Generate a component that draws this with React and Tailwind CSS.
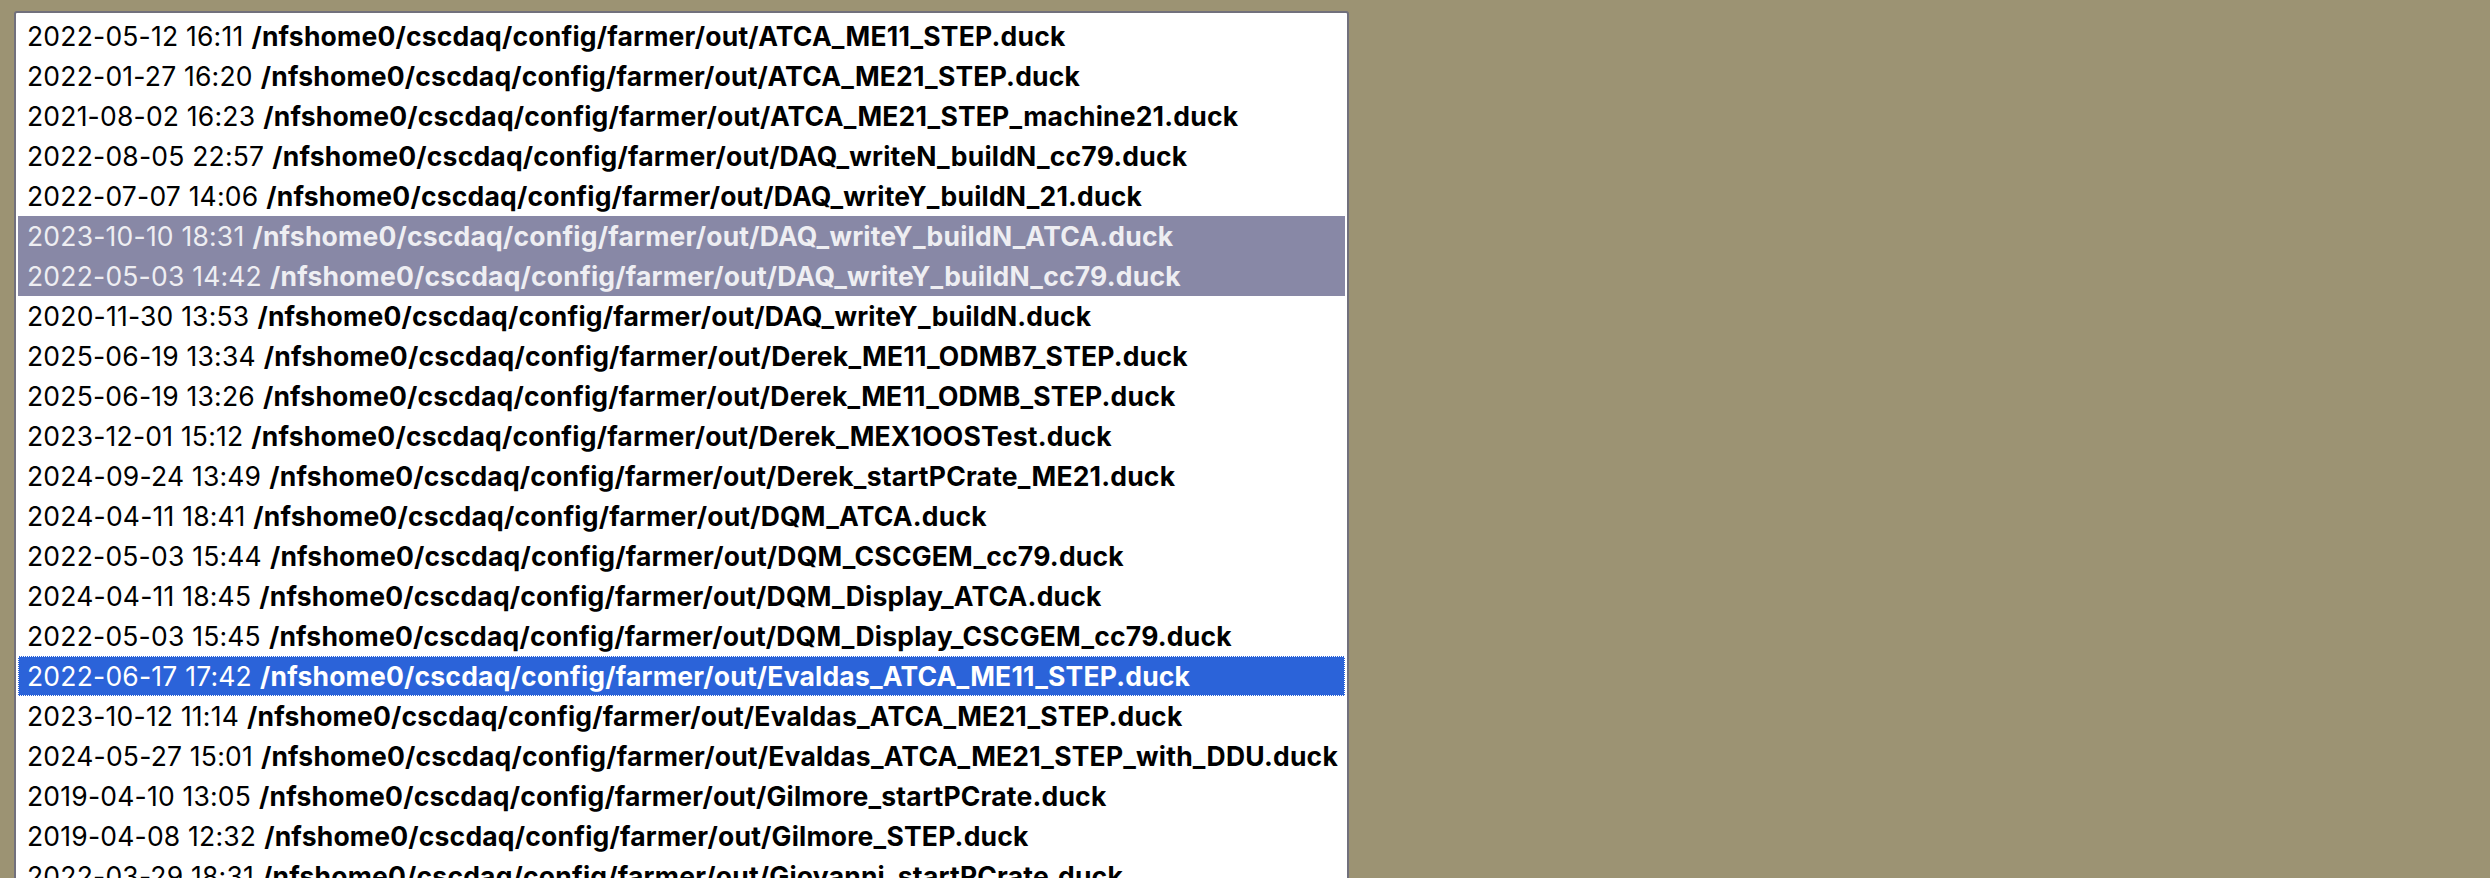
import React from "react";

const rows = [
  ["2022-05-12 16:11", "/nfshome0/cscdaq/config/farmer/out/ATCA_ME11_STEP.duck", 0],
  ["2022-01-27 16:20", "/nfshome0/cscdaq/config/farmer/out/ATCA_ME21_STEP.duck", 0],
  ["2021-08-02 16:23", "/nfshome0/cscdaq/config/farmer/out/ATCA_ME21_STEP_machine21.duck", 0],
  ["2022-08-05 22:57", "/nfshome0/cscdaq/config/farmer/out/DAQ_writeN_buildN_cc79.duck", 0],
  ["2022-07-07 14:06", "/nfshome0/cscdaq/config/farmer/out/DAQ_writeY_buildN_21.duck", 0],
  ["2023-10-10 18:31", "/nfshome0/cscdaq/config/farmer/out/DAQ_writeY_buildN_ATCA.duck", 1],
  ["2022-05-03 14:42", "/nfshome0/cscdaq/config/farmer/out/DAQ_writeY_buildN_cc79.duck", 1],
  ["2020-11-30 13:53", "/nfshome0/cscdaq/config/farmer/out/DAQ_writeY_buildN.duck", 0],
  ["2025-06-19 13:34", "/nfshome0/cscdaq/config/farmer/out/Derek_ME11_ODMB7_STEP.duck", 0],
  ["2025-06-19 13:26", "/nfshome0/cscdaq/config/farmer/out/Derek_ME11_ODMB_STEP.duck", 0],
  ["2023-12-01 15:12", "/nfshome0/cscdaq/config/farmer/out/Derek_MEX1OOSTest.duck", 0],
  ["2024-09-24 13:49", "/nfshome0/cscdaq/config/farmer/out/Derek_startPCrate_ME21.duck", 0],
  ["2024-04-11 18:41", "/nfshome0/cscdaq/config/farmer/out/DQM_ATCA.duck", 0],
  ["2022-05-03 15:44", "/nfshome0/cscdaq/config/farmer/out/DQM_CSCGEM_cc79.duck", 0],
  ["2024-04-11 18:45", "/nfshome0/cscdaq/config/farmer/out/DQM_Display_ATCA.duck", 0],
  ["2022-05-03 15:45", "/nfshome0/cscdaq/config/farmer/out/DQM_Display_CSCGEM_cc79.duck", 0],
  ["2022-06-17 17:42", "/nfshome0/cscdaq/config/farmer/out/Evaldas_ATCA_ME11_STEP.duck", 2],
  ["2023-10-12 11:14", "/nfshome0/cscdaq/config/farmer/out/Evaldas_ATCA_ME21_STEP.duck", 0],
  ["2024-05-27 15:01", "/nfshome0/cscdaq/config/farmer/out/Evaldas_ATCA_ME21_STEP_with_DDU.duck", 0],
  ["2019-04-10 13:05", "/nfshome0/cscdaq/config/farmer/out/Gilmore_startPCrate.duck", 0],
  ["2019-04-08 12:32", "/nfshome0/cscdaq/config/farmer/out/Gilmore_STEP.duck", 0],
  ["2022-03-29 18:31", "/nfshome0/cscdaq/config/farmer/out/Giovanni_startPCrate.duck", 0],
];

function Row({ date, path, sel }) {
  const base = "h-[40px] flex items-center pl-[9px] whitespace-nowrap";
  const cls =
    sel === 1
      ? "bg-[#8888a6] text-[#eeeef2]"
      : sel === 2
      ? "bg-[#2b63d9] text-white outline outline-1 outline-dotted outline-white -outline-offset-1"
      : "text-black";
  return (
    <div className={`${base} ${cls}`}>
      <span>{date}</span>
      <span className="font-bold ml-[8px]">{path}</span>
    </div>
  );
}

export default function App() {
  return (
    <div className="w-[2490px] h-[878px] overflow-hidden bg-[#9c9373] pt-[11px] pl-[14px]">
      <div
        className="w-[1335px] h-[1000px] bg-white border-2 border-[#71707c] rounded-[3px] pt-[3px] px-[2px] overflow-hidden text-[26.5px] leading-[40px] tracking-[0.2px]"
        style={{ fontFamily: 'Inter, "Liberation Sans", sans-serif' }}
      >
        {rows.map((r, i) => (
          <Row key={i} date={r[0]} path={r[1]} sel={r[2]} />
        ))}
      </div>
    </div>
  );
}
